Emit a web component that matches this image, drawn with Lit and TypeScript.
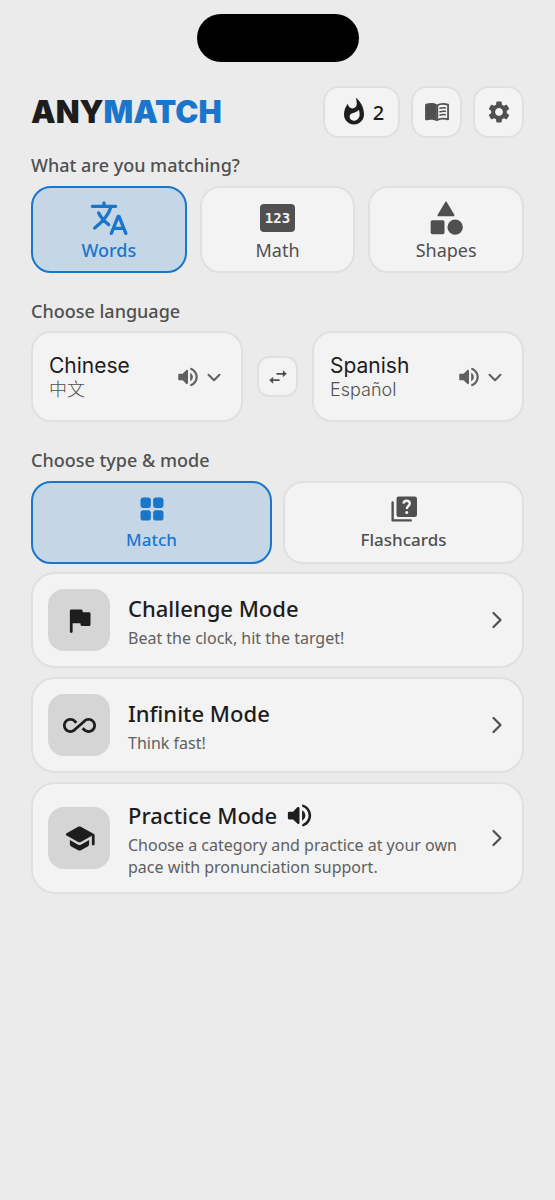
import { LitElement, html, css, svg, nothing } from "lit";
import { customElement, state, property } from "lit/decorators.js";

const SHAPES: Record<string, unknown> = {
  fire: svg`<path fill="currentColor" d="M13.5.67s.74 2.65.74 4.8c0 2.06-1.35 3.73-3.41 3.73-2.07 0-3.63-1.67-3.63-3.73l.03-.36C5.21 7.51 4 10.62 4 14c0 4.42 3.58 8 8 8s8-3.58 8-8C20 8.61 17.41 3.8 13.5.67zM11.71 19c-1.78 0-3.22-1.4-3.22-3.14 0-1.62 1.05-2.76 2.81-3.12 1.77-.36 3.6-1.21 4.62-2.58.39 1.29.59 2.65.59 4.04 0 2.65-2.15 4.8-4.8 4.8z"/>`,
  book: svg`<path fill="currentColor" d="M11.8 4.900C10.200 3.900 8.600 3.600 6.500 3.600c-1.700 0-3.200.2-4.600.7-.6.2-.9.6-.9 1.200v13.200c0 .8.7 1.200 1.400 1 1.300-.4 2.600-.6 4.100-.6 2 0 3.700.5 5.300 1.400z"/><path fill="none" stroke="currentColor" stroke-width="1.600" stroke-linejoin="round" d="M12.300 5.700c1.500-.9 3.200-1.300 5.200-1.300 1.700 0 3.200.3 4.700.8v13.600c-1.500-.4-3.100-.6-4.700-.6-2 0-3.700.4-5.200 1.300z"/><path fill="none" stroke="currentColor" stroke-width="1.400" stroke-linecap="round" d="M14.800 8.600c1.600-.5 3.200-.6 4.800-.3M14.800 11.700c1.600-.5 3.200-.6 4.800-.3M14.800 14.800c1.600-.5 3.200-.6 4.800-.3"/>`,
  gear: svg`<path fill="currentColor" d="M19.14 12.94c.04-.3.06-.61.06-.94 0-.32-.02-.64-.07-.94l2.03-1.58c.18-.14.23-.41.12-.61l-1.92-3.32c-.12-.22-.37-.29-.59-.22l-2.39.96c-.5-.38-1.03-.7-1.62-.94l-.36-2.54c-.04-.24-.24-.41-.48-.41h-3.84c-.24 0-.43.17-.47.41l-.36 2.54c-.59.24-1.13.57-1.62.94l-2.39-.96c-.22-.08-.47 0-.59.22L2.740 8.870c-.12.21-.08.47.12.61l2.030 1.580c-.05.3-.09.63-.09.94s.02.64.07.94l-2.030 1.580c-.18.14-.23.41-.12.61l1.920 3.320c.12.22.37.29.59.22l2.390-.96c.5.38 1.030.7 1.620.94l.36 2.540c.05.24.24.41.48.41h3.840c.24 0 .44-.17.47-.41l.36-2.540c.59-.24 1.130-.56 1.620-.94l2.390.96c.22.08.47 0 .59-.22l1.920-3.320c.12-.22.07-.47-.12-.61l-2.010-1.580zM12 15.600c-1.980 0-3.600-1.620-3.600-3.600s1.620-3.600 3.600-3.600 3.600 1.620 3.600 3.600-1.620 3.600-3.600 3.600z"/>`,
  translate: svg`<path fill="none" stroke="currentColor" stroke-width="2" stroke-linecap="round" stroke-linejoin="round" d="M2 5h14M9 3v2M13.100 5.500C12 9.500 9 13.600 3.400 18M5.800 9c1.300 2.600 3.400 5 6 7M13.400 21.200 17.500 11h.5l4.100 10.200M14.900 18.200h5.700"/>`,
  category: svg`<path fill="currentColor" stroke="currentColor" stroke-width="1.200" stroke-linejoin="round" d="M12 2.800 16.500 10.400H7.500z"/><circle fill="currentColor" cx="17.500" cy="17.500" r="4.600"/><rect fill="currentColor" x="2.800" y="13.400" width="8.300" height="8.300" rx="1"/>`,
  grid: svg`<g fill="currentColor"><rect x="2.800" y="2.800" width="8.300" height="8.300" rx="2.300"/><rect x="12.900" y="2.800" width="8.300" height="8.300" rx="2.300"/><rect x="2.800" y="12.900" width="8.300" height="8.300" rx="2.300"/><rect x="12.900" y="12.900" width="8.300" height="8.300" rx="2.300"/></g>`,
  quiz: svg`<rect fill="currentColor" x="6" y="2" width="16.400" height="16.400" rx="1.800"/><path fill="none" stroke="currentColor" stroke-width="1.900" stroke-linecap="round" stroke-linejoin="round" d="M2.900 6.800v14.300h14.500"/><path fill="none" stroke="#f3f3f3" stroke-width="1.900" d="M11.600 7.700c.1-1.400 1.100-2.300 2.500-2.300s2.500.9 2.500 2.200c0 1.900-2.400 2.100-2.400 4.500"/><circle fill="#f3f3f3" cx="14.200" cy="14.700" r="1.200"/>`,
  volume: svg`<path fill="currentColor" d="M3 10v4c0 .55.45 1 1 1h3l3.290 3.290c.63.63 1.710.18 1.710-.71V6.410c0-.89-1.080-1.340-1.710-.71L7 9H4c-.55 0-1 .45-1 1zm13.500 2c0-1.770-1.020-3.290-2.500-4.030v8.050c1.480-.73 2.500-2.250 2.500-4.020zM14 4.450v.2c0 .38.25.71.6.85C17.180 6.530 19 9.060 19 12s-1.820 5.470-4.400 6.500c-.36.14-.6.47-.6.85v.2c0 .63.63 1.070 1.210.85C18.600 19.110 21 15.840 21 12s-2.400-7.110-5.790-8.400c-.58-.23-1.210.22-1.210.85z"/>`,
  down: svg`<path fill="none" stroke="currentColor" stroke-width="2.200" stroke-linecap="round" stroke-linejoin="round" d="m6 9.500 6 6 6-6"/>`,
  next: svg`<path fill="none" stroke="currentColor" stroke-width="1.900" stroke-linecap="round" stroke-linejoin="round" d="m9 6 6 6-6 6"/>`,
  swap: svg`<path fill="none" stroke="currentColor" stroke-width="1.900" stroke-linecap="round" d="M11 8.500h8M13 15.500H5"/><path fill="currentColor" d="m17.300 4.700 4.300 3.800-4.300 3.800zM6.700 11.700l-4.300 3.800 4.300 3.800z"/>`,
  flag: svg`<path fill="currentColor" d="m14.400 6-.24-1.200c-.09-.46-.5-.8-.98-.8H6c-.55 0-1 .45-1 1v15c0 .55.45 1 1 1s1-.45 1-1v-6h5.600l.24 1.200c.09.47.5.8.98.8H19c.55 0 1-.45 1-1V7c0-.55-.45-1-1-1h-4.600z"/>`,
  infinity: svg`<path fill="currentColor" d="M18.600 6.620c-1.440 0-2.800.56-3.770 1.530L12 10.660 10.480 12h.01L7.800 14.390c-.64.64-1.490.99-2.400.99-1.870 0-3.390-1.510-3.390-3.380S3.530 8.620 5.400 8.620c.91 0 1.760.35 2.440 1.030l1.130 1 1.510-1.340L9.220 8.200C8.200 7.180 6.840 6.620 5.400 6.620 2.420 6.620 0 9.040 0 12s2.420 5.380 5.400 5.380c1.440 0 2.800-.56 3.770-1.530l2.830-2.500.01.01L13.520 12h-.01l2.690-2.390c.64-.64 1.490-.99 2.400-.99 1.870 0 3.390 1.510 3.390 3.380s-1.520 3.380-3.390 3.380c-.9 0-1.760-.35-2.440-1.030l-1.140-1.010-1.510 1.340 1.270 1.120c1.020 1.010 2.370 1.570 3.820 1.570 2.980 0 5.400-2.410 5.400-5.380s-2.420-5.370-5.400-5.370z"/>`,
  school: svg`<path fill="currentColor" d="M5 13.180v2.810c0 .73.4 1.410 1.040 1.760l5 2.730c.6.33 1.320.33 1.920 0l5-2.730c.64-.35 1.040-1.030 1.040-1.760v-2.810l-6.040 3.300c-.6.33-1.320.33-1.920 0L5 13.180zm6.040-9.660-8.430 4.600c-.69.38-.69 1.380 0 1.760l8.430 4.600c.6.33 1.320.33 1.920 0L21 10.090V16c0 .55.45 1 1 1s1-.45 1-1V9.590c0-.37-.2-.7-.52-.88l-9.520-5.190c-.6-.32-1.320-.32-1.920 0z"/>`,
};

@customElement("ui-icon")
class UiIcon extends LitElement {
  @property() name = "";
  static styles = css`
    :host { display: inline-flex; flex: none; width: 26px; height: 26px; }
    svg { width: 100%; height: 100%; }
  `;
  render() {
    return html`<svg viewBox="0 0 24 24" aria-hidden="true">${SHAPES[this.name]}</svg>`;
  }
}

const SUBJECTS = [
  { label: "Words", icon: "translate" },
  { label: "Math", icon: "" },
  { label: "Shapes", icon: "category" },
];

const TYPES = [
  { label: "Match", icon: "grid" },
  { label: "Flashcards", icon: "quiz" },
];

const MODES = [
  { title: "Challenge Mode", text: "Beat the clock, hit the target!", icon: "flag", audio: false },
  { title: "Infinite Mode", text: "Think fast!", icon: "infinity", audio: false },
  {
    title: "Practice Mode",
    text: "Choose a category and practice at your own pace with pronunciation support.",
    icon: "school",
    audio: true,
  },
];

@customElement("app-root")
class AppRoot extends LitElement {
  @state() subject = "Words";
  @state() type = "Match";
  @state() langs = [
    { name: "Chinese", native: "中文", code: "zh" },
    { name: "Spanish", native: "Español", code: "es" },
  ];

  static styles = css`
    :host {
      display: block;
      min-height: 100vh;
      box-sizing: border-box;
      padding: 14px 31px 32px;
      background: #ebebeb;
      color: #1d1d1d;
      font-family: "Noto Sans", "Noto Sans CJK SC", sans-serif;
    }
    * { box-sizing: border-box; }
    h1, h2, h3, p { margin: 0; }
    button {
      margin: 0;
      padding: 0;
      font: inherit;
      color: #505050;
      background: #f3f3f3;
      border: 2px solid #e0e0e0;
      border-radius: 20px;
      cursor: pointer;
    }
    .island {
      width: 162px;
      height: 48px;
      margin: 0 auto;
      border-radius: 24px;
      background: #000;
    }
    header {
      display: flex;
      align-items: center;
      justify-content: space-between;
      margin-top: 24px;
    }
    .logo {
      font: 900 31px/40px Inter, sans-serif;
      color: #1d1d1d;
    }
    .logo span { color: #1976cb; }
    .tools { display: flex; gap: 11px; }
    .tools button {
      display: flex;
      align-items: center;
      justify-content: center;
      width: 51px;
      height: 52px;
      border-radius: 16px;
    }
    .tools .streak {
      width: 77px;
      gap: 4px;
      color: #1d1d1d;
      font-size: 20px;
      font-weight: 500;
    }
    .streak ui-icon { width: 30px; height: 30px; }
    h2 {
      font-size: 18px;
      font-weight: 500;
      line-height: 24px;
      color: #505050;
    }
    .section { margin-top: 26px; }
    .section.first { margin-top: 15px; }
    .row {
      display: grid;
      grid-auto-flow: column;
      grid-auto-columns: 1fr;
      gap: 13px;
      margin-top: 9px;
    }
    .row.pair { gap: 11px; }
    .tile {
      display: flex;
      flex-direction: column;
      align-items: center;
      justify-content: center;
      height: 87px;
      font-size: 18px;
      line-height: 24px;
    }
    .tile ui-icon { width: 40px; height: 40px; }
    .pair .tile { height: 83px; gap: 4px; font-size: 17px; font-weight: 500; }
    .pair .tile ui-icon { width: 30px; height: 30px; }
    .tile[aria-pressed="true"] {
      color: #1976cb;
      background: #c5d6e7;
      border-color: #1976cb;
      font-weight: 500;
    }
    .digits-box { display: flex; align-items: center; height: 40px; }
    .digits {
      width: 35px;
      height: 28px;
      border-radius: 4px;
      background: #505050;
      color: #f3f3f3;
      font: 700 14px/28px "DejaVu Sans Mono", monospace;
      text-align: center;
    }
    .langs {
      display: flex;
      align-items: center;
      gap: 14px;
      margin-top: 8px;
    }
    .lang {
      display: flex;
      align-items: center;
      flex: 1;
      min-width: 0;
      height: 91px;
      padding: 0 16px;
      text-align: left;
      gap: 2px;
      font-family: Inter, "Noto Sans CJK SC", sans-serif;
    }
    .names { flex: 1; display: flex; flex-direction: column; }
    .name { font-size: 21px; line-height: 26px; color: #1d1d1d; }
    .native { font-size: 18px; line-height: 22px; font-weight: 300; color: #505050; }
    .lang ui-icon { color: #606060; }
    .lang ui-icon.down { width: 22px; height: 22px; }
    .swap {
      display: flex;
      align-items: center;
      justify-content: center;
      width: 41px;
      height: 41px;
      border-radius: 12px;
    }
    .swap ui-icon { width: 22px; height: 22px; }
    .modes { display: flex; flex-direction: column; gap: 9px; margin-top: 8px; }
    .mode {
      display: flex;
      align-items: center;
      width: 100%;
      min-height: 96px;
      padding: 14px 11px 14px 15px;
      border-radius: 24px;
      text-align: left;
    }
    .badge {
      display: flex;
      align-items: center;
      justify-content: center;
      flex: none;
      width: 62px;
      height: 62px;
      border-radius: 16px;
      background: #d5d5d5;
      color: #1d1d1d;
    }
    .badge ui-icon { width: 33px; height: 33px; }
    .info { flex: 1; margin: 0 18px; }
    .title {
      display: flex;
      align-items: center;
      gap: 7px;
      margin-bottom: 2px;
      font-size: 22px;
      line-height: 34px;
      font-weight: 500;
      color: #1d1d1d;
    }
    .title ui-icon { width: 31px; height: 31px; }
    .text { display: block; font-size: 16px; line-height: 22px; color: #606060; }
    .mode > ui-icon { width: 28px; height: 28px; }
  `;

  private tile(item: { label: string; icon: string }, on: boolean, pick: () => void) {
    return html`<button class="tile" type="button" aria-pressed=${on ? "true" : "false"} @click=${pick}>
      ${item.icon
        ? html`<ui-icon name=${item.icon}></ui-icon>`
        : html`<span class="digits-box"><span class="digits">123</span></span>`}
      <span>${item.label}</span>
    </button>`;
  }

  private lang(l: { name: string; native: string; code: string }) {
    return html`<button class="lang" type="button" aria-haspopup="listbox">
      <span class="names">
        <span class="name">${l.name}</span>
        <span class="native" lang=${l.code}>${l.native}</span>
      </span>
      <ui-icon name="volume"></ui-icon>
      <ui-icon class="down" name="down"></ui-icon>
    </button>`;
  }

  render() {
    return html`
      <div class="island"></div>
      <header>
        <h1 class="logo">ANY<span>MATCH</span></h1>
        <div class="tools">
          <button class="streak" type="button"><ui-icon name="fire"></ui-icon>2</button>
          <button type="button" aria-label="Dictionary"><ui-icon name="book"></ui-icon></button>
          <button type="button" aria-label="Settings"><ui-icon name="gear"></ui-icon></button>
        </div>
      </header>
      <main>
        <section class="section first">
          <h2>What are you matching?</h2>
          <div class="row">
            ${SUBJECTS.map((s) => this.tile(s, this.subject === s.label, () => (this.subject = s.label)))}
          </div>
        </section>
        <section class="section">
          <h2>Choose language</h2>
          <div class="langs">
            ${this.lang(this.langs[0])}
            <button class="swap" type="button" aria-label="Swap languages"
              @click=${() => (this.langs = [this.langs[1], this.langs[0]])}>
              <ui-icon name="swap"></ui-icon>
            </button>
            ${this.lang(this.langs[1])}
          </div>
        </section>
        <section class="section">
          <h2>Choose type &amp; mode</h2>
          <div class="row pair">
            ${TYPES.map((t) => this.tile(t, this.type === t.label, () => (this.type = t.label)))}
          </div>
          <div class="modes">
            ${MODES.map(
              (m) => html`<button class="mode" type="button">
                <span class="badge"><ui-icon name=${m.icon}></ui-icon></span>
                <span class="info">
                  <span class="title">${m.title}${m.audio ? html`<ui-icon name="volume"></ui-icon>` : nothing}</span>
                  <span class="text">${m.text}</span>
                </span>
                <ui-icon name="next"></ui-icon>
              </button>`
            )}
          </div>
        </section>
      </main>
    `;
  }
}
